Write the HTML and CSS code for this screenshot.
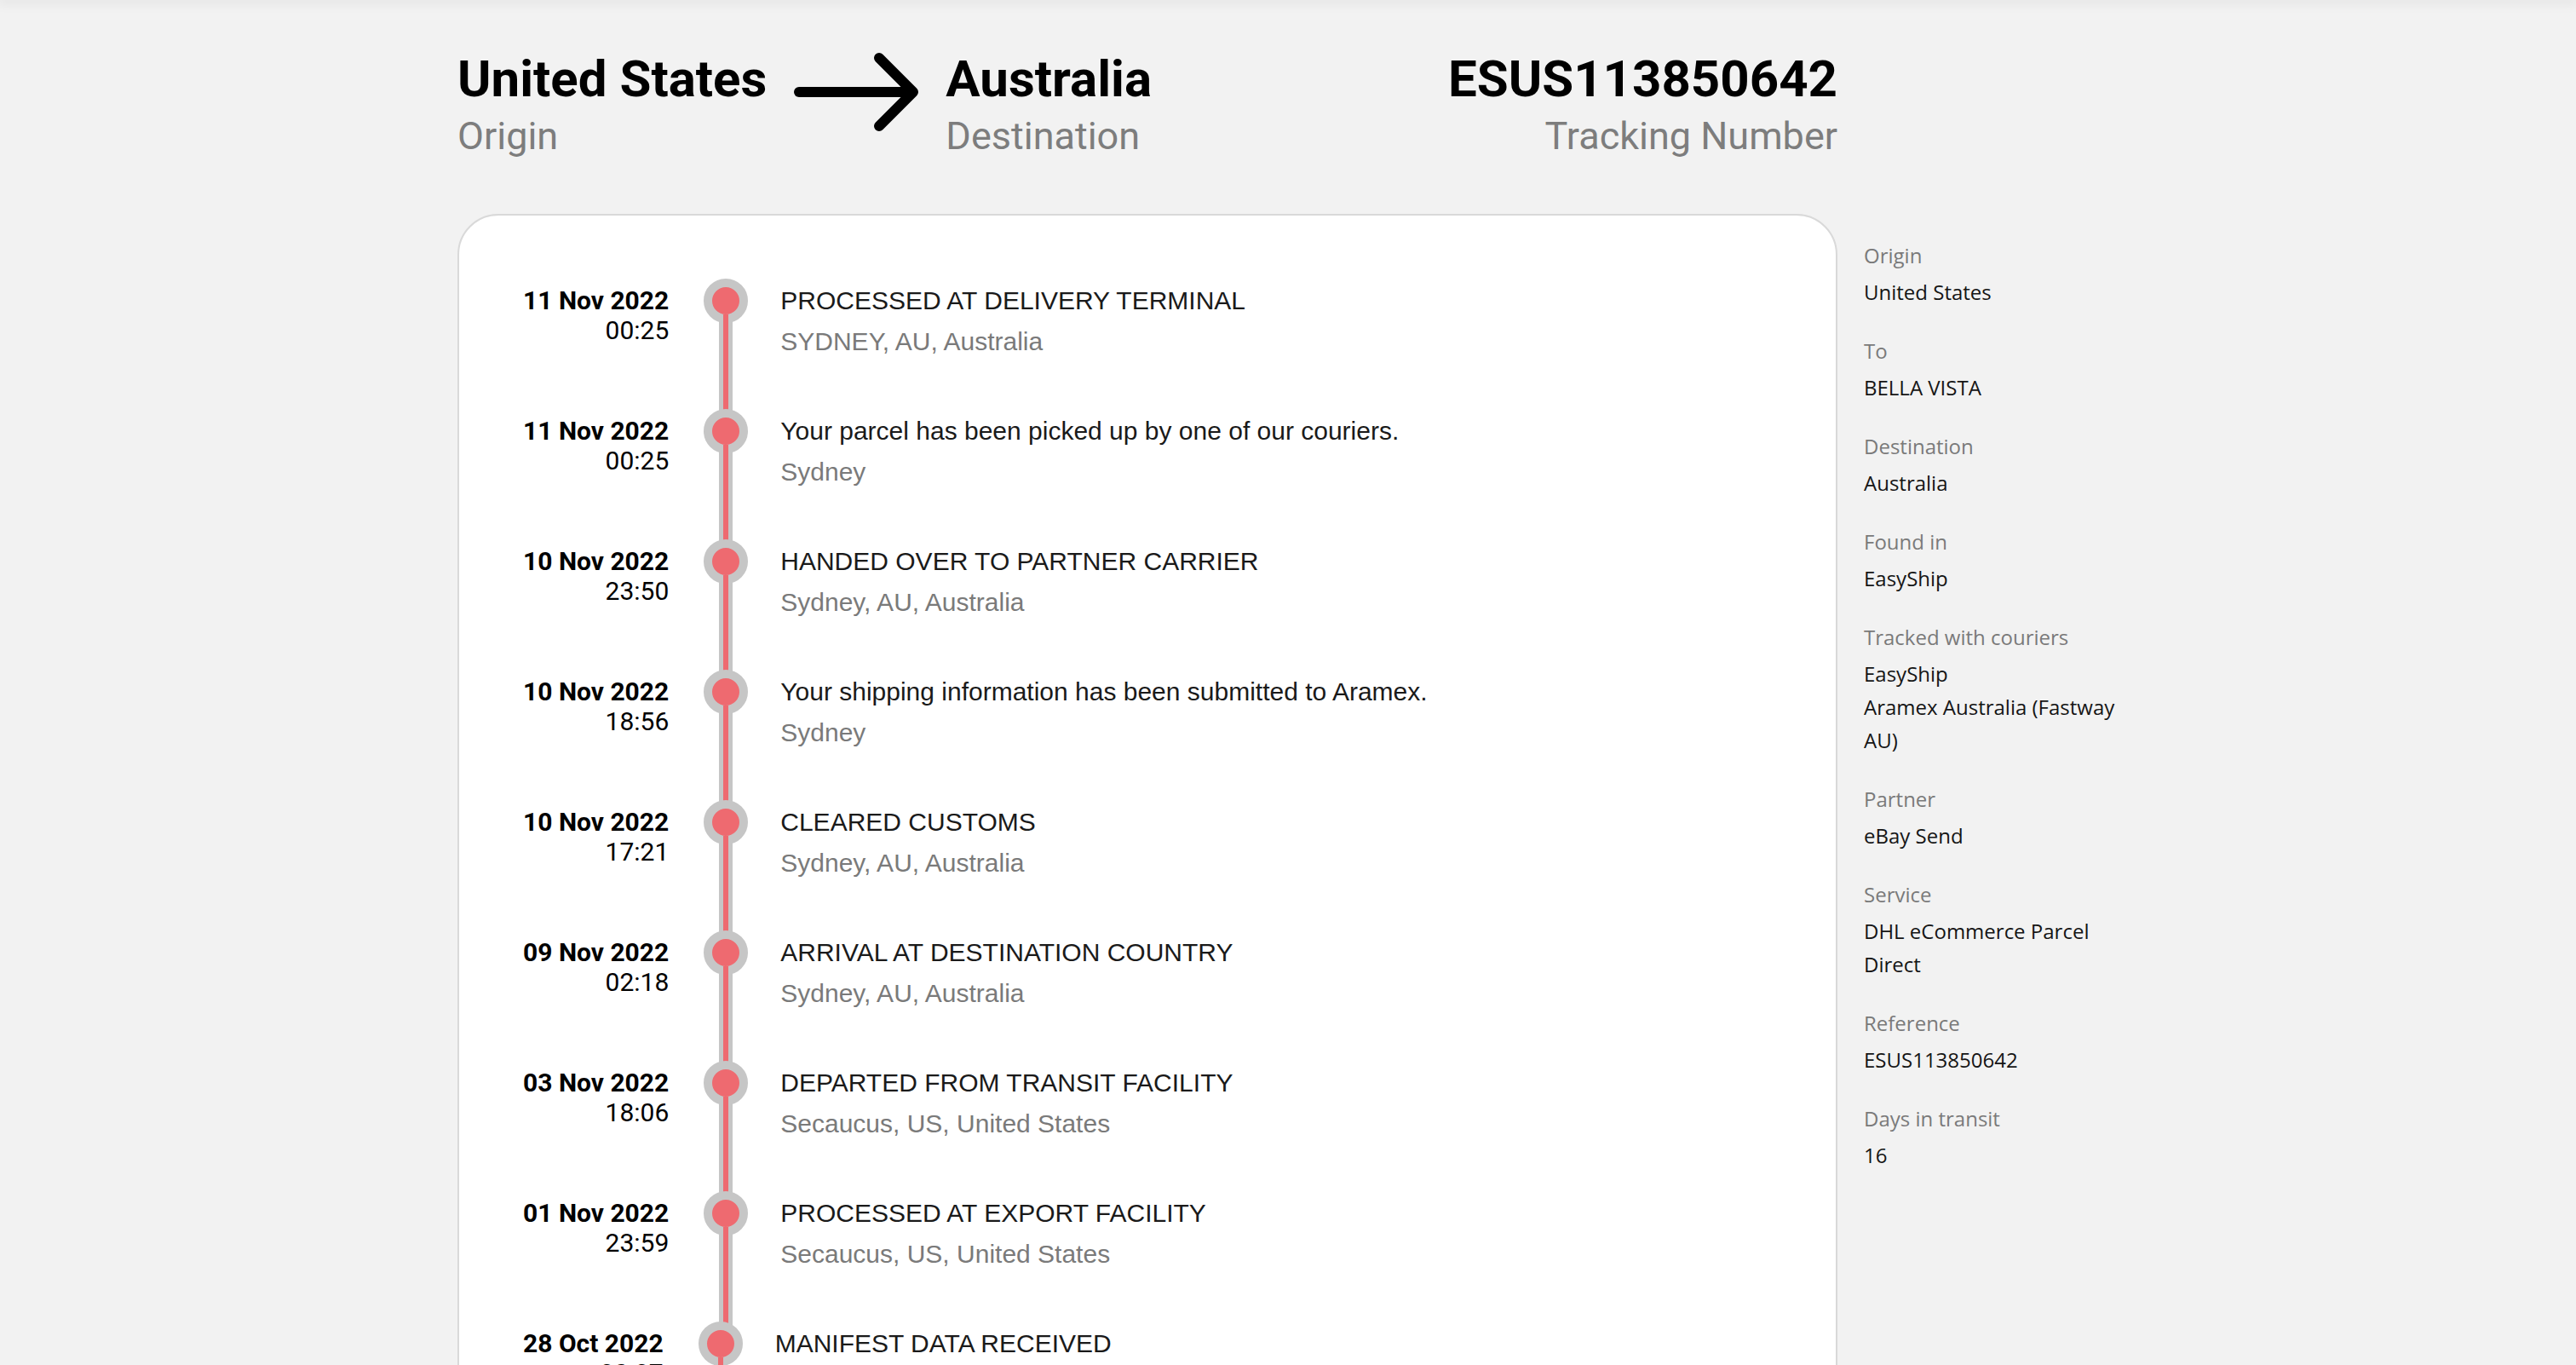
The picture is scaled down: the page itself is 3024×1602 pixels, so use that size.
FILE: index.html
```html
<!DOCTYPE html>
<html lang="en">
<head>
<meta charset="utf-8">
<title>Tracking ESUS113850642</title>
<link rel="stylesheet" href="styles.css">
</head>
<body>
<div class="topshadow"></div>
<div class="page">
  <header class="route">
    <div class="place">
      <div class="place-name">United States</div>
      <div class="place-label">Origin</div>
    </div>
    <svg class="arrow" width="146" height="96" viewBox="0 0 146 96" aria-hidden="true">
      <path d="M6 48 H138" fill="none" stroke="#000" stroke-width="12" stroke-linecap="round"/>
      <path d="M100 8 L140 48 L100 88" fill="none" stroke="#000" stroke-width="12" stroke-linecap="round" stroke-linejoin="round"/>
    </svg>
    <div class="place">
      <div class="place-name">Australia</div>
      <div class="place-label">Destination</div>
    </div>
    <div class="place place-right">
      <div class="place-name">ESUS113850642</div>
      <div class="place-label">Tracking Number</div>
    </div>
  </header>

  <section class="card">
    <ol class="timeline">
      <li class="event">
        <div class="when"><b>11 Nov 2022</b>00:25</div>
        <div class="marker"><span class="dot"></span><span class="rail"></span></div>
        <div class="what"><div class="title">PROCESSED AT DELIVERY TERMINAL</div><div class="where">SYDNEY, AU, Australia</div></div>
      </li>
      <li class="event">
        <div class="when"><b>11 Nov 2022</b>00:25</div>
        <div class="marker"><span class="dot"></span><span class="rail"></span></div>
        <div class="what"><div class="title">Your parcel has been picked up by one of our couriers.</div><div class="where">Sydney</div></div>
      </li>
      <li class="event">
        <div class="when"><b>10 Nov 2022</b>23:50</div>
        <div class="marker"><span class="dot"></span><span class="rail"></span></div>
        <div class="what"><div class="title">HANDED OVER TO PARTNER CARRIER</div><div class="where">Sydney, AU, Australia</div></div>
      </li>
      <li class="event">
        <div class="when"><b>10 Nov 2022</b>18:56</div>
        <div class="marker"><span class="dot"></span><span class="rail"></span></div>
        <div class="what"><div class="title">Your shipping information has been submitted to Aramex.</div><div class="where">Sydney</div></div>
      </li>
      <li class="event">
        <div class="when"><b>10 Nov 2022</b>17:21</div>
        <div class="marker"><span class="dot"></span><span class="rail"></span></div>
        <div class="what"><div class="title">CLEARED CUSTOMS</div><div class="where">Sydney, AU, Australia</div></div>
      </li>
      <li class="event">
        <div class="when"><b>09 Nov 2022</b>02:18</div>
        <div class="marker"><span class="dot"></span><span class="rail"></span></div>
        <div class="what"><div class="title">ARRIVAL AT DESTINATION COUNTRY</div><div class="where">Sydney, AU, Australia</div></div>
      </li>
      <li class="event">
        <div class="when"><b>03 Nov 2022</b>18:06</div>
        <div class="marker"><span class="dot"></span><span class="rail"></span></div>
        <div class="what"><div class="title">DEPARTED FROM TRANSIT FACILITY</div><div class="where">Secaucus, US, United States</div></div>
      </li>
      <li class="event">
        <div class="when"><b>01 Nov 2022</b>23:59</div>
        <div class="marker"><span class="dot"></span><span class="rail"></span></div>
        <div class="what"><div class="title">PROCESSED AT EXPORT FACILITY</div><div class="where">Secaucus, US, United States</div></div>
      </li>
      <li class="event">
        <div class="when"><b>28 Oct 2022</b>20:27</div>
        <div class="marker"><span class="dot"></span><span class="rail"></span></div>
        <div class="what"><div class="title">MANIFEST DATA RECEIVED</div><div class="where">Secaucus, US, United States</div></div>
      </li>
    </ol>
  </section>

  <aside class="details">
    <dl>
      <dt>Origin</dt><dd>United States</dd>
      <dt>To</dt><dd>BELLA VISTA</dd>
      <dt>Destination</dt><dd>Australia</dd>
      <dt>Found in</dt><dd>EasyShip</dd>
      <dt>Tracked with couriers</dt><dd>EasyShip<br>Aramex Australia (Fastway AU)</dd>
      <dt>Partner</dt><dd>eBay Send</dd>
      <dt>Service</dt><dd>DHL eCommerce Parcel Direct</dd>
      <dt>Reference</dt><dd>ESUS113850642</dd>
      <dt>Days in transit</dt><dd>16</dd>
    </dl>
  </aside>
</div>
</body>
</html>
```

FILE: styles.css
```css
* { box-sizing: border-box; }

body {
  margin: 0;
  background: #f2f2f2;
  font-family: Roboto, "Liberation Sans", sans-serif;
  color: #000;
}

.topshadow {
  height: 0;
  box-shadow: 0 0 14px 3px rgba(0, 0, 0, 0.10);
}

.page {
  display: grid;
  grid-template-columns: 1620px 310px;
  column-gap: 31px;
  width: 1950px;
  margin: 0 auto;
  padding-top: 58px;
}

/* header */
.route {
  grid-column: 1;
  grid-row: 1;
  display: flex;
  align-items: flex-start;
  margin-bottom: 65px;
}

.place-name {
  font-family: Roboto, sans-serif;
  font-weight: 700;
  font-size: 60px;
  line-height: 70px;
  color: #000;
}

.place-label {
  font-family: Roboto, sans-serif;
  font-weight: 400;
  font-size: 45px;
  line-height: 52px;
  color: #7d7d7d;
  margin-top: 6px;
}

.place-right {
  margin-left: auto;
  text-align: right;
}

.arrow {
  flex: 0 0 auto;
  margin: 2px 32px 0 32px;
}

/* card */
.card {
  grid-column: 1;
  grid-row: 2;
  background: #fff;
  border: 2px solid #d9d9d9;
  border-radius: 48px;
  padding: 82px 76px 160px 75px;
}

.timeline {
  list-style: none;
  margin: 0;
  padding: 0;
}

.event {
  display: flex;
  align-items: stretch;
}

.when {
  flex: 0 0 auto;
  text-align: right;
  font-family: Roboto, sans-serif;
  font-size: 30px;
  line-height: 35px;
  color: #000;
}

.when b {
  display: block;
  font-weight: 700;
}

.marker {
  flex: 0 0 52px;
  margin: 0 38px 0 41px;
  display: flex;
  flex-direction: column;
  align-items: center;
}

.dot {
  display: block;
  width: 52px;
  height: 52px;
  margin-top: -8px;
  border: 10px solid #c6c6c6;
  border-radius: 50%;
  background: #ee6a70;
}

.rail {
  display: block;
  flex: 1 1 auto;
  width: 16px;
  margin-top: -10px;
  background: linear-gradient(to right, #c6c6c6 5px, #ee6a70 5px, #ee6a70 11px, #c6c6c6 11px);
}

.what {
  padding-bottom: 70px;
  font-family: "Liberation Sans", Arial, sans-serif;
  font-size: 30px;
  line-height: 35px;
}

.title {
  color: #1a1a1a;
}

.where {
  margin-top: 13px;
  color: #7a7a7a;
}

/* sidebar */
.details {
  grid-column: 2;
  grid-row: 2;
  padding-top: 31px;
  font-family: "Open Sans", sans-serif;
  font-size: 24px;
}

.details dl {
  margin: 0;
}

.details dt {
  line-height: 36px;
  color: #7a7a7a;
}

.details dd {
  margin: 5px 0 32px;
  line-height: 39px;
  color: #151515;
}
```
